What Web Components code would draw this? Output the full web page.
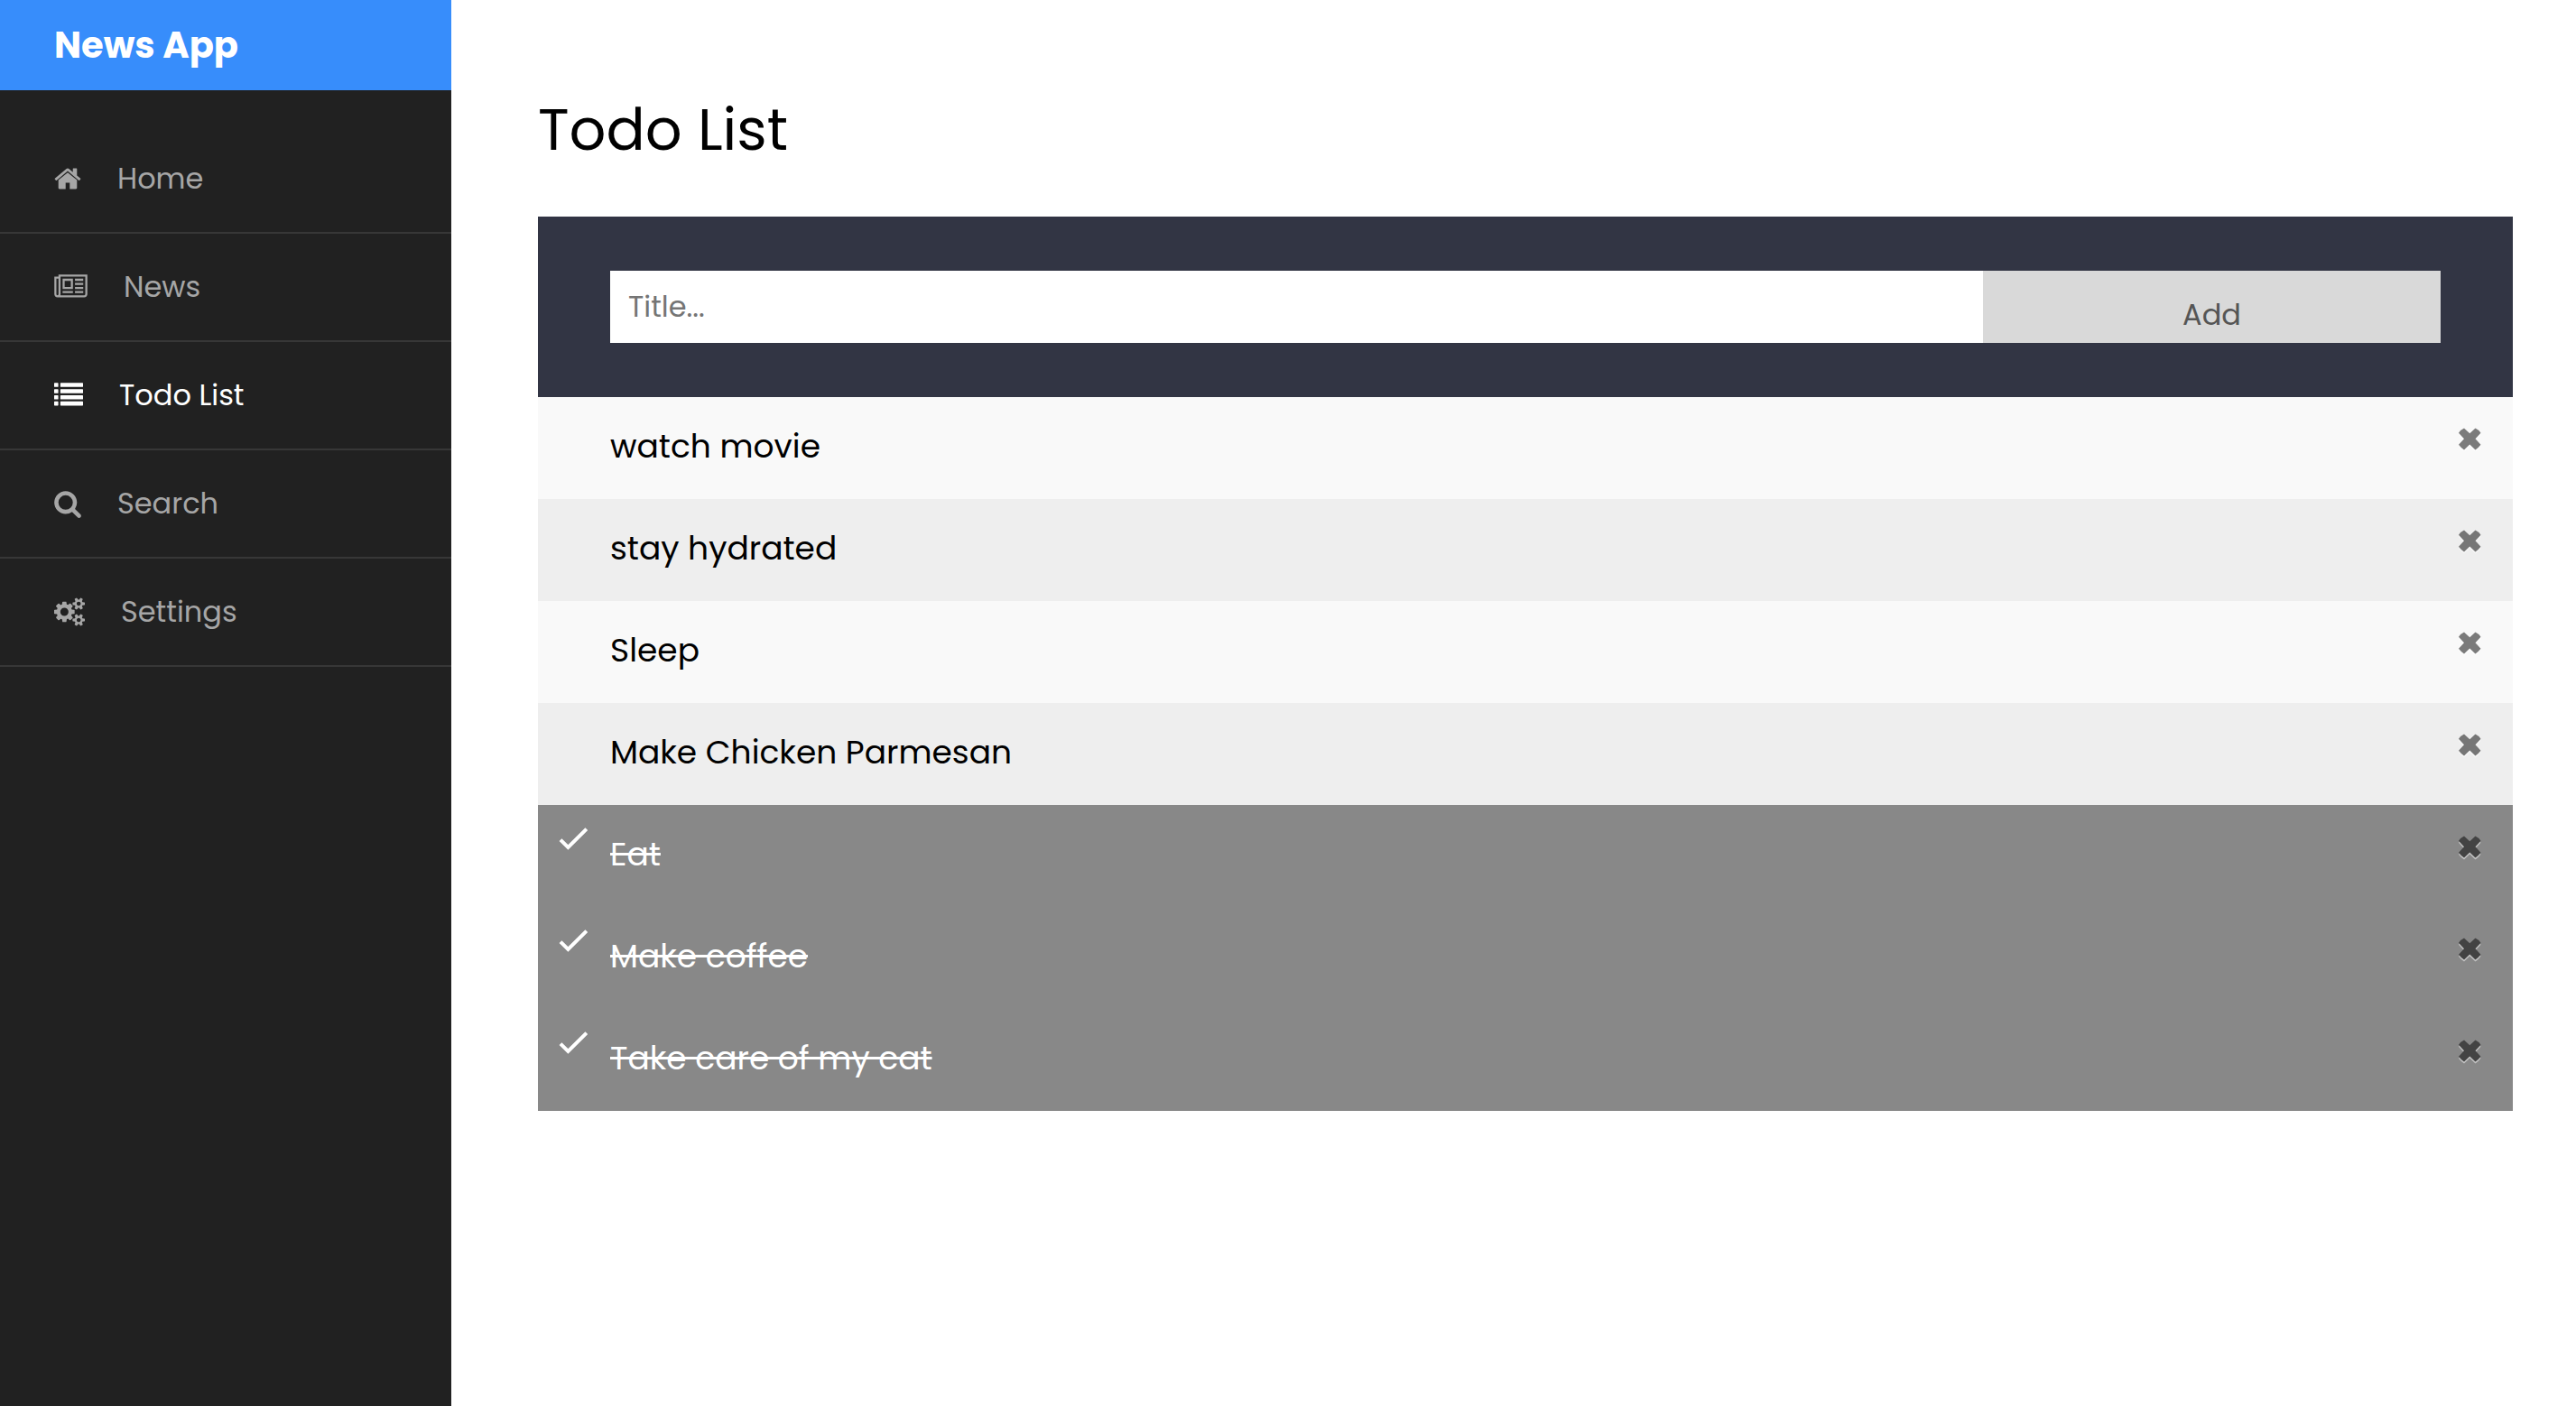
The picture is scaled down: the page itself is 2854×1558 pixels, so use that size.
<!DOCTYPE html>
<html lang="en">
<head>
<meta charset="utf-8">
<meta name="viewport" content="width=device-width, initial-scale=1">
<title>News App - Todo List</title>
<style>
  body { margin: 0; background: #fff; color: #000; font-family: Poppins, Inter, sans-serif; font-size: 32px; line-height: 58px; }
</style>
</head>
<body>
<news-app>
  <news-sidebar slot="sidebar" brand="News App">
    <nav-item icon="home" href="#home">Home</nav-item>
    <nav-item icon="news" href="#news">News</nav-item>
    <nav-item icon="list" href="#todo" active>Todo List</nav-item>
    <nav-item icon="search" href="#search">Search</nav-item>
    <nav-item icon="cogs" href="#settings">Settings</nav-item>
  </news-sidebar>
  <todo-page heading="Todo List">
    <todo-form slot="form"></todo-form>
    <todo-item>watch movie</todo-item>
    <todo-item>stay hydrated</todo-item>
    <todo-item>Sleep</todo-item>
    <todo-item>Make Chicken Parmesan</todo-item>
    <todo-item done>Eat</todo-item>
    <todo-item done>Make coffee</todo-item>
    <todo-item done>Take care of my cat</todo-item>
  </todo-page>
</news-app>

<script>
  const ICONS = {
    home: { box: '64 0 1664 1792', w: 30, d: 'M1472 992v480q0 26-19 45t-45 19h-384v-384h-256v384h-384q-26 0-45-19t-19-45v-480q0-1 .5-3t.5-3l575-474 575 474q1 2 1 6zm223-69l-62 74q-8 9-21 11h-3q-13 0-21-7l-692-577-692 577q-12 8-24 7-13-2-21-11l-62-74q-8-10-7-23.5t11-21.5l719-599q32-26 76-26t76 26l244 204v-195q0-14 9-23t23-9h192q14 0 23 9t9 23v408l219 182q10 8 11 21.5t-7 23.5z' },
    news: { box: '0 0 2048 1792', w: 37, d: 'M1024 512h-384v384h384v-384zm128 640v128h-640v-128h640zm0-768v640h-640v-640h640zm640 768v128h-512v-128h512zm0-256v128h-512v-128h512zm0-256v128h-512v-128h512zm0-256v128h-512v-128h512zm-1536 960v-960h-128v960q0 26 19 45t45 19 45-19 19-45zm1664 0v-1088h-1536v1088q0 33-11 64h1483q26 0 45-19t19-45zm128-1216v1216q0 80-56 136t-136 56h-1664q-80 0-136-56t-56-136v-1088h256v-128h1792z' },
    list: { box: '0 0 1792 1792', w: 32, d: 'M32 1280h192q32 0 32 32v192q0 32-32 32h-192q-32 0-32-32v-192q0-32 32-32zM32 896h192q32 0 32 32v192q0 32-32 32h-192q-32 0-32-32v-192q0-32 32-32zM32 512h192q32 0 32 32v192q0 32-32 32h-192q-32 0-32-32v-192q0-32 32-32zM32 128h192q32 0 32 32v192q0 32-32 32h-192q-32 0-32-32v-192q0-32 32-32zM416 1280h1344q32 0 32 32v192q0 32-32 32h-1344q-32 0-32-32v-192q0-32 32-32zM416 896h1344q32 0 32 32v192q0 32-32 32h-1344q-32 0-32-32v-192q0-32 32-32zM416 512h1344q32 0 32 32v192q0 32-32 32h-1344q-32 0-32-32v-192q0-32 32-32zM416 128h1344q32 0 32 32v192q0 32-32 32h-1344q-32 0-32-32v-192q0-32 32-32z' },
    search: { box: '64 0 1664 1792', w: 30, d: 'M1216 832q0-185-131.5-316.5t-316.5-131.5-316.5 131.5-131.5 316.5 131.5 316.5 316.5 131.5 316.5-131.5 131.5-316.5zm512 832q0 52-38 90t-90 38q-54 0-90-38l-343-342q-179 124-399 124-143 0-273.5-55.5t-225-150-150-225-55.5-273.5 55.5-273.5 150-225 225-150 273.5-55.5 273.5 55.5 225 150 150 225 55.5 273.5q0 220-124 399l343 343q37 37 37 90z' },
    cogs: { box: '0 0 1920 1792', w: 34, d: 'M896 896q0-106-75-181t-181-75-181 75-75 181 75 181 181 75 181-75 75-181zm768 512q0-52-38-90t-90-38-90 38-38 90q0 53 37.5 90.5t90.5 37.5 90.5-37.5 37.5-90.5zm0-1024q0-52-38-90t-90-38-90 38-38 90q0 53 37.5 90.5t90.5 37.5 90.5-37.5 37.5-90.5zm-384 421v185q0 10-7 19.5t-16 10.5l-155 24q-11 35-32 76 34 48 90 115 7 11 7 20 0 12-7 19-23 30-82.5 89.5t-78.5 59.5q-11 0-21-7l-115-90q-37 19-77 31-11 108-23 155-7 24-30 24h-186q-11 0-20-7.5t-10-17.5l-23-153q-34-10-75-31l-118 89q-7 7-20 7-11 0-21-8-144-133-144-160 0-9 7-19 10-14 41-53t47-61q-23-44-35-82l-152-24q-10-1-17-9.5t-7-19.5v-185q0-10 7-19.5t16-10.5l155-24q11-35 32-76-34-48-90-115-7-11-7-20 0-12 7-20 22-30 82-89t79-59q11 0 21 7l115 90q34-18 77-32 11-108 23-154 7-24 30-24h186q11 0 20 7.5t10 17.5l23 153q34 10 75 31l118-89q8-7 20-7 11 0 21 8 144 133 144 160 0 8-7 19-12 16-42 54t-45 60q23 48 34 82l152 23q10 2 17 10.5t7 19.5zm640 533v140q0 16-149 31-12 27-30 52 51 113 51 138 0 4-4 7-122 71-124 71-8 0-46-47t-52-68q-20 2-30 2t-30-2q-14 21-52 68t-46 47q-2 0-124-71-4-3-4-7 0-25 51-138-18-25-30-52-149-15-149-31v-140q0-16 149-31 13-29 30-52-51-113-51-138 0-4 4-7 4-2 35-20t59-34 30-16q8 0 46 46.5t52 67.5q20-2 30-2t30 2q51-71 92-112l6-2q4 0 124 70 4 3 4 7 0 25-51 138 17 23 30 52 149 15 149 31zm0-1024v140q0 16-149 31-12 27-30 52 51 113 51 138 0 4-4 7-122 71-124 71-8 0-46-47t-52-68q-20 2-30 2t-30-2q-14 21-52 68t-46 47q-2 0-124-71-4-3-4-7 0-25 51-138-18-25-30-52-149-15-149-31v-140q0-16 149-31 13-29 30-52-51-113-51-138 0-4 4-7 4-2 35-20t59-34 30-16q8 0 46 46.5t52 67.5q20-2 30-2t30 2q51-71 92-112l6-2q4 0 124 70 4 3 4 7 0 25-51 138 17 23 30 52 149 15 149 31z' }
  };

  class Base extends HTMLElement {
    connectedCallback() {
      if (this.shadowRoot) return;
      this.attachShadow({ mode: 'open' }).innerHTML = '<style>*{box-sizing:border-box}</style>' + this.view();
    }
  }

  customElements.define('news-app', class extends Base {
    view() {
      return `<style>
        :host { display: grid; grid-template-columns: 500px minmax(0, 1fr); min-height: 100vh; }
        main { padding: 96px 70px 96px 96px; }
      </style>
      <slot name="sidebar"></slot><main><slot></slot></main>`;
    }
  });

  customElements.define('news-sidebar', class extends Base {
    view() {
      return `<style>
        :host { display: block; background: #212121; }
        header { display: flex; align-items: center; height: 100px; padding: 0 60px; background: #378dfb; color: #fff; font-size: 40px; font-weight: 700; }
        nav { padding-top: 39px; }
      </style>
      <header>${this.getAttribute('brand')}</header>
      <nav><slot></slot></nav>`;
    }
  });

  customElements.define('nav-item', class extends Base {
    view() {
      const i = ICONS[this.getAttribute('icon')];
      return `<style>
        :host { display: block; border-bottom: 2px solid #373737; color: #a6a6a6; }
        :host([active]) { color: #fff; }
        a { display: flex; align-items: center; gap: 40px; padding: 30px 60px; color: inherit; text-decoration: none; }
        svg { flex: none; height: 32px; fill: currentColor; overflow: visible; }
      </style>
      <a href="${this.getAttribute('href')}"${this.hasAttribute('active') ? ' aria-current="page"' : ''}><svg width="${i.w}" viewBox="${i.box}" aria-hidden="true"><path d="${i.d}"/></svg><slot></slot></a>`;
    }
  });

  customElements.define('todo-page', class extends Base {
    view() {
      return `<style>
        :host { display: block; }
        h1 { margin: 0 0 48px; font-size: 64px; font-weight: 400; line-height: 96px; }
        .list { display: flex; flex-direction: column; }
        ::slotted(todo-item:nth-of-type(even)) { --row: #eee; }
      </style>
      <h1>${this.getAttribute('heading')}</h1>
      <slot name="form"></slot>
      <div class="list" role="list"><slot></slot></div>`;
    }
  });

  customElements.define('todo-form', class extends Base {
    view() {
      return `<style>
        :host { display: block; padding: 60px 80px; background: #323544; }
        form { display: grid; grid-template-columns: 3fr 1fr; height: 80px; margin: 0; }
        input, button { min-width: 0; height: 80px; border: 0; border-radius: 0; font: inherit; }
        input { padding: 0 20px; background: #fff; color: #000; }
        input::placeholder { color: #757575; opacity: 1; }
        button { padding: 18px 0 0; background: #d9d9d9; color: #555; cursor: pointer; }
      </style>
      <form onsubmit="return false"><input type="text" aria-label="Title" placeholder="Title..."><button type="submit">Add</button></form>`;
    }
  });

  customElements.define('todo-item', class extends Base {
    view() {
      this.setAttribute('role', 'listitem');
      return `<style>
        :host { display: grid; grid-template-columns: 80px minmax(0, 1fr) 94px; align-items: start; background: var(--row, #f9f9f9); font-size: 36px; line-height: 64px; cursor: pointer; }
        :host([done]) { background: #888; color: #fff; }
        .check { visibility: hidden; padding: 25px 0 0 23px; line-height: 0; }
        :host([done]) .check { visibility: visible; }
        .text { padding: 23px 0 26px; }
        :host([done]) .text { text-decoration: line-through; }
        button { display: grid; place-items: center; height: 94px; padding: 0; border: 0; background: none; color: #000; opacity: .5; cursor: pointer; }
        button svg { fill: #000; filter: drop-shadow(0 2px 0 #fff); }
      </style>
      <span class="check"><svg width="32" height="26" viewBox="0 0 32 26" fill="none" stroke="#fff" stroke-width="4" aria-hidden="true"><path d="M2 13.6L10.4 22L30.8 1.6"/></svg></span>
      <span class="text"><slot></slot></span>
      <button type="button" aria-label="Remove"><svg width="26" height="26" viewBox="0 0 26 26" aria-hidden="true"><path d="M6 .5L12.300 6.300L18.500 .5Q22 2 24.500 5.800L18.500 12.200L24.500 18.700Q22 22 18.500 24.500L12.300 18.500L6 24.500Q2.500 22 0 18.700L6 12.200L0 5.800Q2.500 2 6 .5Z"/></svg></button>`;
    }
  });
</script>
</body>
</html>
